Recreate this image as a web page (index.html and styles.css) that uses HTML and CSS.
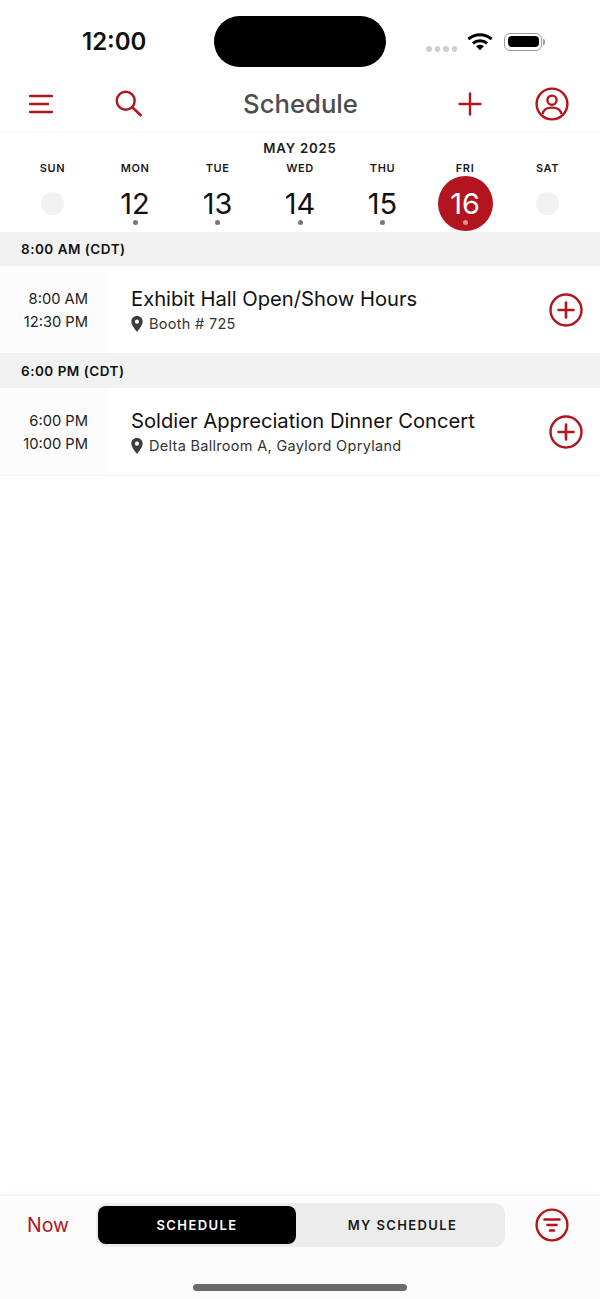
FILE: index.html
```html
<!DOCTYPE html>
<html lang="en">
<head>
    <meta charset="UTF-8">
    <meta name="viewport" content="width=device-width, initial-scale=1.0">
    <title>Schedule</title>
    <link rel="stylesheet" href="styles.css">
</head>
<body>
    <div class="app">
        <div class="status-bar">
            <span class="clock">12:00</span>
            <div class="island"></div>
            <div class="status-icons">
                <div class="signal"><i></i><i></i><i></i><i></i></div>
                <svg class="wifi" width="26" height="19" viewBox="0 0 28 20">
                    <path d="M1.5 7.500C8.500 1 19.500 1 26.500 7.500" fill="none" stroke="#000" stroke-width="3.200"/>
                    <path d="M6.500 12C10.500 8.400 17.500 8.400 21.500 12" fill="none" stroke="#000" stroke-width="3.200"/>
                    <path d="M9.800 15.200C12.200 13 15.800 13 18.200 15.200L14 19.500Z" fill="#000"/>
                </svg>
                <div class="battery"><div class="battery-fill"></div></div>
                <div class="battery-cap"></div>
            </div>
        </div>

        <div class="nav">
            <button class="nav-btn">
                <svg width="24" height="20" viewBox="0 0 24 20"><path d="M1 2H23M1 10H19M1 18H23" fill="none" stroke="#b2151f" stroke-width="2.400" stroke-linecap="round"/></svg>
            </button>
            <button class="nav-btn">
                <svg width="28" height="28" viewBox="0 0 30 30"><circle cx="11.500" cy="11.500" r="9.600" fill="none" stroke="#b2151f" stroke-width="2.600"/><path d="M18.500 18.500L27.500 27" fill="none" stroke="#b2151f" stroke-width="2.800" stroke-linecap="round"/></svg>
            </button>
            <h1>Schedule</h1>
            <button class="nav-btn">
                <svg width="24" height="24" viewBox="0 0 24 24"><path d="M12 1.500V22.500M1.500 12H22.500" fill="none" stroke="#b2151f" stroke-width="2.400" stroke-linecap="round"/></svg>
            </button>
            <button class="nav-btn">
                <svg width="34" height="34" viewBox="0 0 34 34"><circle cx="17" cy="17" r="15.400" fill="none" stroke="#b2151f" stroke-width="2.400"/><circle cx="17" cy="13.200" r="4.600" fill="none" stroke="#b2151f" stroke-width="2.400"/><path d="M7.500 27C8.500 22.500 11.500 20.600 17 20.600S25.500 22.500 26.500 27" fill="none" stroke="#b2151f" stroke-width="2.400"/></svg>
            </button>
        </div>

        <div class="calendar">
            <div class="month">MAY 2025</div>
            <div class="week">
                <div class="day"><span class="day-name">SUN</span><div class="blank"></div></div>
                <div class="day"><span class="day-name">MON</span><div class="date">12<i class="dot"></i></div></div>
                <div class="day"><span class="day-name">TUE</span><div class="date">13<i class="dot"></i></div></div>
                <div class="day"><span class="day-name">WED</span><div class="date">14<i class="dot"></i></div></div>
                <div class="day"><span class="day-name">THU</span><div class="date">15<i class="dot"></i></div></div>
                <div class="day"><span class="day-name">FRI</span><div class="date active">16<i class="dot"></i></div></div>
                <div class="day"><span class="day-name">SAT</span><div class="blank"></div></div>
            </div>
        </div>

        <div class="list">
            <div class="section">8:00 AM (CDT)</div>
            <div class="event">
                <div class="times"><span>8:00 AM</span><span>12:30 PM</span></div>
                <div class="info">
                    <div class="title">Exhibit Hall Open/Show Hours</div>
                    <div class="place">
                        <svg width="12" height="16" viewBox="0 0 12 16"><path fill-rule="evenodd" d="M6 0C2.700 0 .3 2.400.3 5.600.3 9.400 4.500 13.800 6 16 7.500 13.800 11.700 9.400 11.700 5.600 11.700 2.400 9.300 0 6 0ZM6 3.600A2.100 2.100 0 1 1 6 7.800 2.100 2.100 0 1 1 6 3.600Z" fill="#3d3d3d"/></svg>
                        Booth # 725
                    </div>
                </div>
                <button class="add">
                    <svg width="34" height="34" viewBox="0 0 34 34"><circle cx="17" cy="17" r="15.500" fill="none" stroke="#b2151f" stroke-width="2.400"/><path d="M17 9.500V24.500M9.500 17H24.500" fill="none" stroke="#b2151f" stroke-width="2.600" stroke-linecap="round"/></svg>
                </button>
            </div>
            <div class="section">6:00 PM (CDT)</div>
            <div class="event">
                <div class="times"><span>6:00 PM</span><span>10:00 PM</span></div>
                <div class="info">
                    <div class="title">Soldier Appreciation Dinner Concert</div>
                    <div class="place">
                        <svg width="12" height="16" viewBox="0 0 12 16"><path fill-rule="evenodd" d="M6 0C2.700 0 .3 2.400.3 5.600.3 9.400 4.500 13.800 6 16 7.500 13.800 11.700 9.400 11.700 5.600 11.700 2.400 9.300 0 6 0ZM6 3.600A2.100 2.100 0 1 1 6 7.800 2.100 2.100 0 1 1 6 3.600Z" fill="#3d3d3d"/></svg>
                        Delta Ballroom A, Gaylord Opryland
                    </div>
                </div>
                <button class="add">
                    <svg width="34" height="34" viewBox="0 0 34 34"><circle cx="17" cy="17" r="15.500" fill="none" stroke="#b2151f" stroke-width="2.400"/><path d="M17 9.500V24.500M9.500 17H24.500" fill="none" stroke="#b2151f" stroke-width="2.600" stroke-linecap="round"/></svg>
                </button>
            </div>
        </div>

        <div class="footer">
            <div class="footer-row">
                <span class="now">Now</span>
                <div class="tabs">
                    <div class="tab selected">SCHEDULE</div>
                    <div class="tab">MY SCHEDULE</div>
                </div>
                <button class="filter">
                    <svg width="34" height="34" viewBox="0 0 34 34"><circle cx="17" cy="17" r="15.400" fill="none" stroke="#b2151f" stroke-width="2.400"/><path d="M9.500 11.500H24.500M12.500 17H21.500M15 22.500H19" fill="none" stroke="#b2151f" stroke-width="2.600" stroke-linecap="round"/></svg>
                </button>
            </div>
            <div class="home-bar"></div>
        </div>
    </div>
</body>
</html>
```

FILE: styles.css
```css
* {
    box-sizing: border-box;
}
body {
    margin: 0;
    font-family: 'Inter', 'Liberation Sans', sans-serif;
    background: white;
    color: black;
}
button {
    padding: 0;
    border: none;
    background: none;
    display: flex;
}
.app {
    height: 1299px;
    display: flex;
    flex-direction: column;
    overflow: hidden;
}

/* status bar */
.status-bar {
    height: 75px;
    flex-shrink: 0;
    padding-top: 16px;
    display: flex;
    align-items: flex-start;
}
.clock {
    width: 214px;
    padding-left: 82px;
    margin-top: 10px;
    font-size: 24px;
    line-height: 32px;
    font-weight: 600;
    color: #111;
}
.island {
    width: 172px;
    height: 51px;
    background: black;
    border-radius: 26px;
}
.status-icons {
    display: flex;
    align-items: center;
    margin-left: 40px;
    margin-top: 16px;
}
.signal {
    display: flex;
    gap: 3px;
    margin-top: 14px;
    margin-right: 10px;
}
.signal i {
    width: 5.500px;
    height: 5.500px;
    border-radius: 50%;
    background: #cfcfcf;
}
.wifi {
    margin-right: 11px;
}
.battery {
    width: 38px;
    height: 18px;
    padding: 2.500px;
    border: 1.500px solid #9a9a9a;
    border-radius: 6px;
}
.battery-fill {
    height: 100%;
    background: black;
    border-radius: 4px;
}
.battery-cap {
    width: 2px;
    height: 6px;
    margin-left: 1px;
    background: #9a9a9a;
    border-radius: 0 2px 2px 0;
}

/* nav */
.nav {
    height: 58px;
    flex-shrink: 0;
    display: flex;
    align-items: center;
    padding: 0 31px 0 29px;
    border-bottom: 1px solid #fafafa;
}
.nav h1 {
    flex: 1;
    margin: 0;
    text-align: center;
    font-size: 25.700px;
    font-weight: 500;
    color: #4d4d4d;
}
.nav-btn:nth-child(2) {
    margin-left: 62px;
}
.nav-btn:nth-child(4) {
    margin-right: 53px;
}

/* calendar */
.calendar {
    height: 99px;
    flex-shrink: 0;
    padding-top: 7px;
}
.month {
    text-align: center;
    font-size: 13.200px;
    line-height: 16px;
    font-weight: 600;
    letter-spacing: 0.8px;
    color: #1a1a1a;
}
.week {
    display: grid;
    grid-template-columns: repeat(7, 82.500px);
    padding-left: 11.300px;
}
.day {
    display: flex;
    flex-direction: column;
    align-items: center;
    margin-top: 6px;
}
.day-name {
    font-size: 11px;
    line-height: 13px;
    font-weight: 600;
    letter-spacing: 0.6px;
    color: #1a1a1a;
}
.date {
    position: relative;
    width: 55px;
    height: 55px;
    margin-top: 1px;
    border-radius: 50%;
    text-align: center;
    font-size: 29px;
    line-height: 55px;
    color: #111;
}
.date.active {
    background: #b2151f;
    color: white;
}
.dot {
    position: absolute;
    left: 25px;
    bottom: 6px;
    width: 5px;
    height: 5px;
    border-radius: 50%;
    background: #777;
}
.active .dot {
    background: #e38d93;
}
.blank {
    width: 23px;
    height: 23px;
    margin-top: 17px;
    border-radius: 50%;
    background: #f1f1f1;
}

/* list */
.list {
    flex: 1;
}
.section {
    height: 34px;
    padding-left: 21px;
    background: #f1f1f1;
    font-size: 13.500px;
    line-height: 34px;
    font-weight: 600;
    letter-spacing: 0.5px;
    color: #111;
}
.event {
    height: 88px;
    display: flex;
    align-items: center;
    border-bottom: 1.500px solid #f1f1f1;
}
.times {
    width: 108px;
    height: 100%;
    flex-shrink: 0;
    display: flex;
    flex-direction: column;
    align-items: flex-end;
    justify-content: center;
    gap: 5px;
    padding: 1px 20px 0 0;
    background: #fcfcfc;
    font-size: 14.700px;
    line-height: 18px;
    color: #222;
}
.info {
    flex: 1;
    padding: 1px 0 0 23px;
}
.title {
    font-size: 20.200px;
    line-height: 26px;
    color: #111;
}
.place {
    display: flex;
    align-items: center;
    gap: 6px;
    margin-top: 2px;
    font-size: 14.500px;
    line-height: 20px;
    letter-spacing: 0.3px;
    color: #333;
}
.add {
    margin-right: 17px;
}

/* footer */
.footer {
    height: 105px;
    flex-shrink: 0;
    background: #fcfcfc;
    border-top: 2px solid #f5f5f5;
    box-shadow: 0 -2px 4px rgba(0, 0, 0, 0.02);
}
.footer-row {
    height: 76px;
    display: flex;
    align-items: center;
    padding: 0 31px 18px 27px;
}
.now {
    width: 69px;
    font-size: 19.500px;
    color: #b2151f;
}
.tabs {
    width: 409px;
    height: 44px;
    display: flex;
    padding: 3px 0 3px 2px;
    background: #ececec;
    border-radius: 11px;
}
.tab {
    flex: 1;
    padding-left: 4px;
    text-align: center;
    font-size: 13px;
    line-height: 38px;
    font-weight: 600;
    letter-spacing: 1.400px;
    color: #1a1a1a;
}
.tab.selected {
    flex: none;
    width: 198px;
    padding-left: 0;
    background: black;
    color: white;
    border-radius: 8px;
}
.filter {
    margin-left: auto;
}
.home-bar {
    width: 214px;
    height: 7px;
    margin: 12px auto 0;
    background: #6a6a6a;
    border-radius: 4px;
}
```
